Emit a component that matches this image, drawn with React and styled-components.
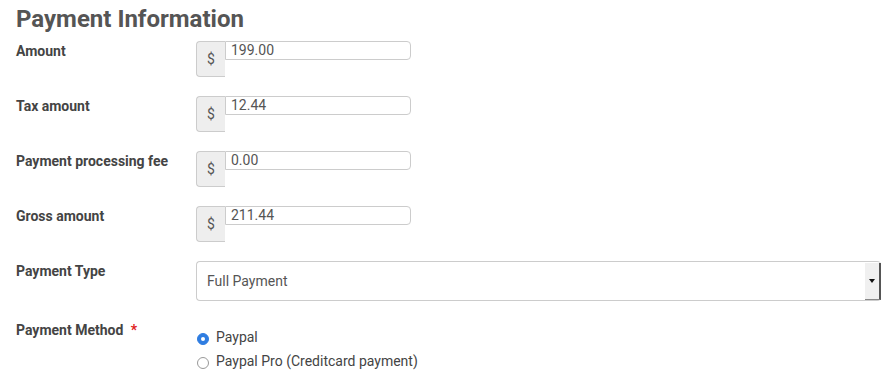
import React from "react"
import styled, { createGlobalStyle } from "styled-components"

const GlobalStyle = createGlobalStyle`
  body {
    margin: 0;
    background: #fff;
    font-family: Roboto, "Liberation Sans", sans-serif;
  }
`

const amounts = [
  { label: "Amount", value: "199.00" },
  { label: "Tax amount", value: "12.44" },
  { label: "Payment processing fee", value: "0.00" },
  { label: "Gross amount", value: "211.44" },
]

export default function App() {
  return (
    <Page>
      <GlobalStyle />
      <Title>Payment Information</Title>
      {amounts.map((a) => (
        <Row key={a.label}>
          <Label>{a.label}</Label>
          <InputGroup>
            <Addon>$</Addon>
            <AmountBox>
              <AmountText>{a.value}</AmountText>
            </AmountBox>
          </InputGroup>
        </Row>
      ))}
      <Row>
        <Label>Payment Type</Label>
        <Select>
          <SelectText>Full Payment</SelectText>
          <ArrowPane>
            <Caret />
          </ArrowPane>
        </Select>
      </Row>
      <Row>
        <Label>
          Payment Method <Required>*</Required>
        </Label>
        <Options>
          <Option>
            <Radio $checked />
            <span>Paypal</span>
          </Option>
          <Option>
            <Radio />
            <span>Paypal Pro (Creditcard payment)</span>
          </Option>
        </Options>
      </Row>
    </Page>
  )
}

const Page = styled.div`
  padding: 4px 0 0 16px;
`

const Title = styled.h2`
  margin: 0 0 7px;
  font-size: 24px;
  line-height: 30px;
  font-weight: 700;
  color: #555;
`

const Row = styled.div`
  display: grid;
  grid-template-columns: 180px 685px;
  align-items: start;
  margin-bottom: 19px;
`

const Label = styled.div`
  font-size: 14px;
  line-height: 20px;
  font-weight: 700;
  color: #444;
`

const Required = styled.span`
  color: #e02020;
  margin-left: 4px;
`

const InputGroup = styled.div`
  display: flex;
  align-items: flex-start;
`

const Addon = styled.div`
  width: 28px;
  height: 34px;
  display: flex;
  align-items: center;
  justify-content: center;
  background: #eee;
  border: 1px solid #ccc;
  border-right: none;
  border-radius: 4px 0 0 4px;
  font-size: 14px;
  color: #555;
`

const AmountBox = styled.div`
  width: 184px;
  height: 17px;
  overflow: hidden;
  border: 1px solid #ccc;
  border-radius: 0 4px 4px 0;
  background: #fff;
`

const AmountText = styled.div`
  padding-left: 5px;
  font-size: 14px;
  line-height: 16px;
  color: #555;
`

const Select = styled.div`
  height: 38px;
  display: flex;
  align-items: stretch;
  border: 1px solid #ccc;
  border-right: none;
  border-radius: 4px;
`

const SelectText = styled.div`
  flex: 1;
  display: flex;
  align-items: center;
  padding-left: 10px;
  font-size: 14px;
  color: #555;
`

const ArrowPane = styled.div`
  width: 14px;
  margin: 1px 0 0;
  display: flex;
  align-items: center;
  justify-content: center;
  background: #f0f0f0;
  border-right: 2px solid #555;
  border-bottom: 1px solid #888;
`

const Caret = styled.div`
  width: 0;
  height: 0;
  border-left: 3px solid transparent;
  border-right: 3px solid transparent;
  border-top: 4px solid #111;
`

const Options = styled.div`
  padding-top: 5px;
  display: flex;
  flex-direction: column;
`

const Option = styled.div`
  display: flex;
  align-items: flex-start;
  gap: 7px;
  font-size: 14px;
  line-height: 24px;
  color: #444;
`

const Radio = styled.span`
  box-sizing: border-box;
  width: 12px;
  height: 12px;
  margin: 8px 0 0 1px;
  border-radius: 50%;
  border: 1px solid ${(p) => (p.$checked ? "#2f7de1" : "#999")};
  background: ${(p) => (p.$checked ? "#2f7de1" : "#fff")};
  display: flex;
  align-items: center;
  justify-content: center;

  &::after {
    content: "";
    width: 4px;
    height: 4px;
    border-radius: 50%;
    background: #fff;
    display: ${(p) => (p.$checked ? "block" : "none")};
  }
`
